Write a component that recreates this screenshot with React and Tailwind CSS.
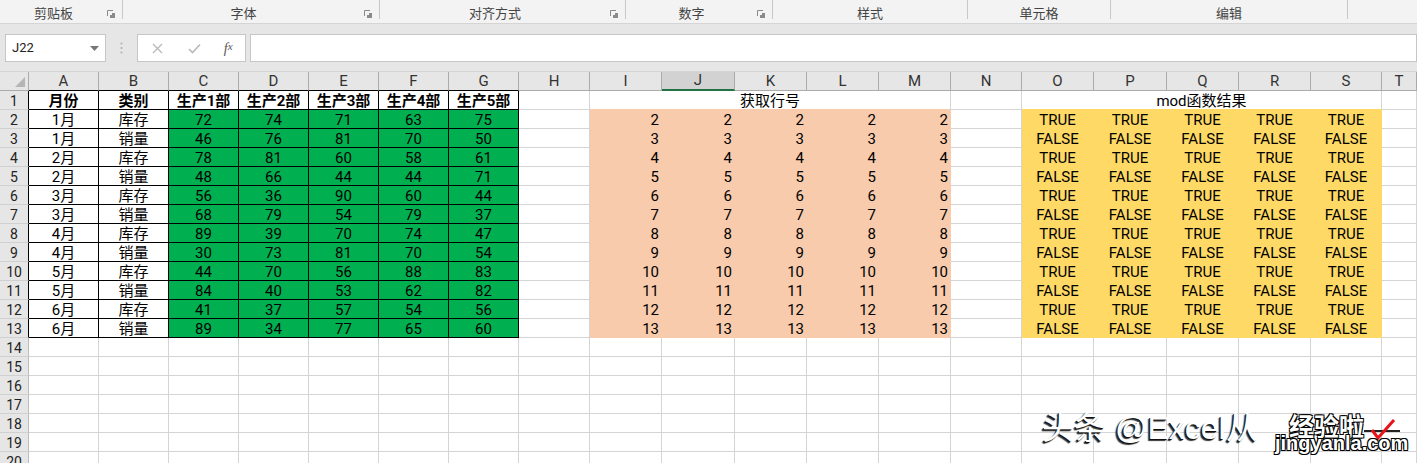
import React from "react";

const letters = ["A", "B", "C", "D", "E", "F", "G", "H", "I", "J", "K", "L", "M", "N", "O", "P", "Q", "R", "S", "T"];

const data = [
  ["1月", "库存", 72, 74, 71, 63, 75],
  ["1月", "销量", 46, 76, 81, 70, 50],
  ["2月", "库存", 78, 81, 60, 58, 61],
  ["2月", "销量", 48, 66, 44, 44, 71],
  ["3月", "库存", 56, 36, 90, 60, 44],
  ["3月", "销量", 68, 79, 54, 79, 37],
  ["4月", "库存", 89, 39, 70, 74, 47],
  ["4月", "销量", 30, 73, 81, 70, 54],
  ["5月", "库存", 44, 70, 56, 88, 83],
  ["5月", "销量", 84, 40, 53, 62, 82],
  ["6月", "库存", 41, 37, 57, 54, 56],
  ["6月", "销量", 89, 34, 77, 65, 60],
];

const groups = [
  { label: "剪贴板", w: "w-[123px]", launcher: true },
  { label: "字体", w: "w-[257px]", launcher: true },
  { label: "对齐方式", w: "w-[246px]", launcher: true },
  { label: "数字", w: "w-[147px]", launcher: true },
  { label: "样式", w: "w-[195px]", launcher: false },
  { label: "单元格", w: "w-[143px]", launcher: false },
  { label: "编辑", w: "w-[237px]", launcher: false },
];

function Launcher() {
  return (
    <svg width="8" height="8" viewBox="0 0 8 8" className="mt-[10px]">
      <path d="M0.5 6V0.5H6" stroke="#8a8a8a" fill="none" />
      <rect x="3" y="3" width="5" height="5" fill="#8a8a8a" />
      <rect x="3" y="3" width="2" height="2" fill="#f3f3f3" />
    </svg>
  );
}

function Cell({ children, className = "" }) {
  return (
    <div className={"h-[19px] pt-[2px] border-r border-b flex items-center overflow-hidden whitespace-nowrap " + className}>
      {children}
    </div>
  );
}

function Row({ r }) {
  const inTable = r <= 13;
  const cells = [];
  cells.push(
    <Cell key="h" className={"justify-center bg-[#e6e6e6] text-[#222] text-[14px] border-b-[#d0d0d0] " + (inTable ? "border-r-black" : "border-r-[#bdbdbd]")}>
      {r}
    </Cell>
  );

  if (r === 1) {
    ["月份", "类别", "生产1部", "生产2部", "生产3部", "生产4部", "生产5部"].forEach((t, i) => {
      cells.push(
        <Cell key={"t" + i} className="justify-center font-bold border-black">
          {t}
        </Cell>
      );
    });
    cells.push(<Cell key="h1" className="border-[#d4d4d4]" />);
    cells.push(
      <Cell key="m1" className="col-span-5 justify-center border-r-[#d4d4d4] border-b-[#f8cbad]">
        获取行号
      </Cell>
    );
    cells.push(<Cell key="n1" className="border-r-[#d4d4d4] border-b-[#d4d4d4]" />);
    cells.push(
      <Cell key="m2" className="col-span-5 justify-center border-r-[#d4d4d4] border-b-[#ffd966]">
        mod函数结果
      </Cell>
    );
    cells.push(<Cell key="t1" className="border-[#d4d4d4]" />);
  } else if (inTable) {
    const d = data[r - 2];
    cells.push(<Cell key="a" className="justify-center border-black">{d[0]}</Cell>);
    cells.push(<Cell key="b" className="justify-center border-black">{d[1]}</Cell>);
    for (let i = 2; i < 7; i++) {
      cells.push(
        <Cell key={"g" + i} className="justify-center bg-[#00b050] border-black">
          {d[i]}
        </Cell>
      );
    }
    cells.push(<Cell key="h" className="border-[#d4d4d4]" />);
    for (let i = 0; i < 5; i++) {
      cells.push(
        <Cell key={"p" + i} className="justify-end pr-[2px] bg-[#f8cbad] border-[#f8cbad]">
          {r}
        </Cell>
      );
    }
    cells.push(<Cell key="n" className="border-[#d4d4d4]" />);
    for (let i = 0; i < 5; i++) {
      cells.push(
        <Cell key={"y" + i} className="justify-center bg-[#ffd966] border-[#ffd966]">
          {r % 2 === 0 ? "TRUE" : "FALSE"}
        </Cell>
      );
    }
    cells.push(<Cell key="t" className="border-[#d4d4d4]" />);
  } else {
    for (let i = 0; i < 20; i++) {
      cells.push(<Cell key={"e" + i} className="border-[#d4d4d4]" />);
    }
  }
  return cells;
}

export default function App() {
  const rows = [];
  for (let r = 1; r <= 20; r++) rows.push(...Row({ r }));

  return (
    <div className="relative w-[1417px] h-[463px] overflow-hidden bg-white font-['Roboto','Noto_Sans_CJK_SC',sans-serif] text-[15px] text-black">
      {/* ribbon group labels */}
      <div className="flex h-[24px] bg-[#f3f3f3] border-b border-[#d5d5d5] text-[13px] text-[#444] font-['Noto_Sans_CJK_SC',sans-serif]">
        {groups.map((g) => (
          <div key={g.label} className={"flex h-[19px] border-r border-[#c8c8c8] " + g.w}>
            <div className="flex-1 flex items-center justify-center pt-[7px]">{g.label}</div>
            {g.launcher && (
              <div className="w-[15px] flex justify-start">
                <Launcher />
              </div>
            )}
          </div>
        ))}
        <div className="flex-1" />
      </div>

      {/* formula bar */}
      <div className="flex items-start bg-[#e6e6e6] h-[48px] pt-[10px] border-b border-[#d4d4d4]">
        <div className="ml-[5px] w-[101px] h-[28px] bg-white border border-[#c6c6c6] flex items-center pl-[6px] pr-[6px] text-[13px] text-[#222]">
          <span className="flex-1">J22</span>
          <svg width="9" height="5" viewBox="0 0 9 5">
            <path d="M0 0H9L4.5 5Z" fill="#777" />
          </svg>
        </div>
        <div className="w-[31px] h-[28px] flex items-center justify-center">
          <svg width="3" height="12" viewBox="0 0 3 12">
            <circle cx="1.5" cy="1.5" r="1" fill="#b0b0b0" />
            <circle cx="1.5" cy="6" r="1" fill="#b0b0b0" />
            <circle cx="1.5" cy="10.5" r="1" fill="#b0b0b0" />
          </svg>
        </div>
        <div className="w-[109px] h-[28px] bg-white border border-[#c6c6c6] flex items-center">
          <div className="w-[40px] flex justify-center">
            <svg width="11" height="11" viewBox="0 0 11 11">
              <path d="M1 1L10 10M10 1L1 10" stroke="#b8b8b8" strokeWidth="1.3" />
            </svg>
          </div>
          <div className="w-[34px] flex justify-center">
            <svg width="13" height="11" viewBox="0 0 13 11">
              <path d="M1 6L4.5 9.5L12 1.5" stroke="#b8b8b8" strokeWidth="1.6" fill="none" />
            </svg>
          </div>
          <div className="w-[34px] flex justify-center text-[14px] italic text-[#555] font-['Liberation_Serif',serif]">
            f<span className="text-[11px]">x</span>
          </div>
        </div>
        <div className="ml-[4px] flex-1 h-[28px] bg-white border border-[#c6c6c6]" />
      </div>

      {/* grid */}
      <div className="grid grid-cols-[29px_70px_70px_70px_70px_70px_70px_70px_71px_72px_73px_72px_72px_72px_71px_72px_73px_72px_72px_71px_1fr]">
        <div className="h-[19px] bg-[#e6e6e6] border-r border-b border-[#ababab] flex items-end justify-end pr-[3px] pb-[3px]">
          <svg width="10" height="10" viewBox="0 0 10 10">
            <path d="M10 0V10H0Z" fill="#b5b5b5" />
          </svg>
        </div>
        {letters.map((l, i) => (
          <div
            key={l}
            className={
              "h-[19px] flex items-center justify-center text-[15px] text-[#333] border-r border-r-[#ababab] " +
              (l === "J" ? "bg-[#d2d2d2] border-b-2 border-b-[#217346]" : "bg-[#e6e6e6] border-b ") +
              (i < 7 ? "border-b-black" : l === "J" ? "" : "border-b-[#ababab]")
            }
          >
            {l}
          </div>
        ))}
        {rows}
      </div>

      {/* watermark */}
      <div className="absolute left-[1042px] top-[407px] text-[32px] leading-[42px] text-white font-['Liberation_Sans','Noto_Sans_CJK_SC',sans-serif] [text-shadow:-1px_1px_0_#111,-2px_2px_1px_#333]">
        头条 @Excel从
      </div>
      <div className="absolute left-[1272px] top-[410px] w-[135px] h-[46px]">
        <div className="absolute left-[17px] top-[1px] text-[25px] leading-[28px] font-bold text-white font-['Noto_Sans_CJK_SC',sans-serif] [text-shadow:1px_1px_0_#000,-1px_-1px_0_#000,1px_-1px_0_#000,-1px_1px_0_#000]">
          经验啦
        </div>
        <div className="absolute left-[92px] top-[20px] w-[36px] h-[2px] bg-[#222]" />
        <svg className="absolute left-[98px] top-[8px]" width="26" height="22" viewBox="0 0 26 22">
          <path d="M2 12L8 20L24 2" stroke="#e8141b" strokeWidth="3" fill="none" />
        </svg>
        <div className="absolute left-[3px] top-[22px] text-[20px] leading-[22px] font-bold text-white font-['Liberation_Sans',sans-serif] [text-shadow:1px_1px_0_#000,-1px_-1px_0_#000,1px_-1px_0_#000,-1px_1px_0_#000]">
          jingyanla.com
        </div>
      </div>
    </div>
  );
}
